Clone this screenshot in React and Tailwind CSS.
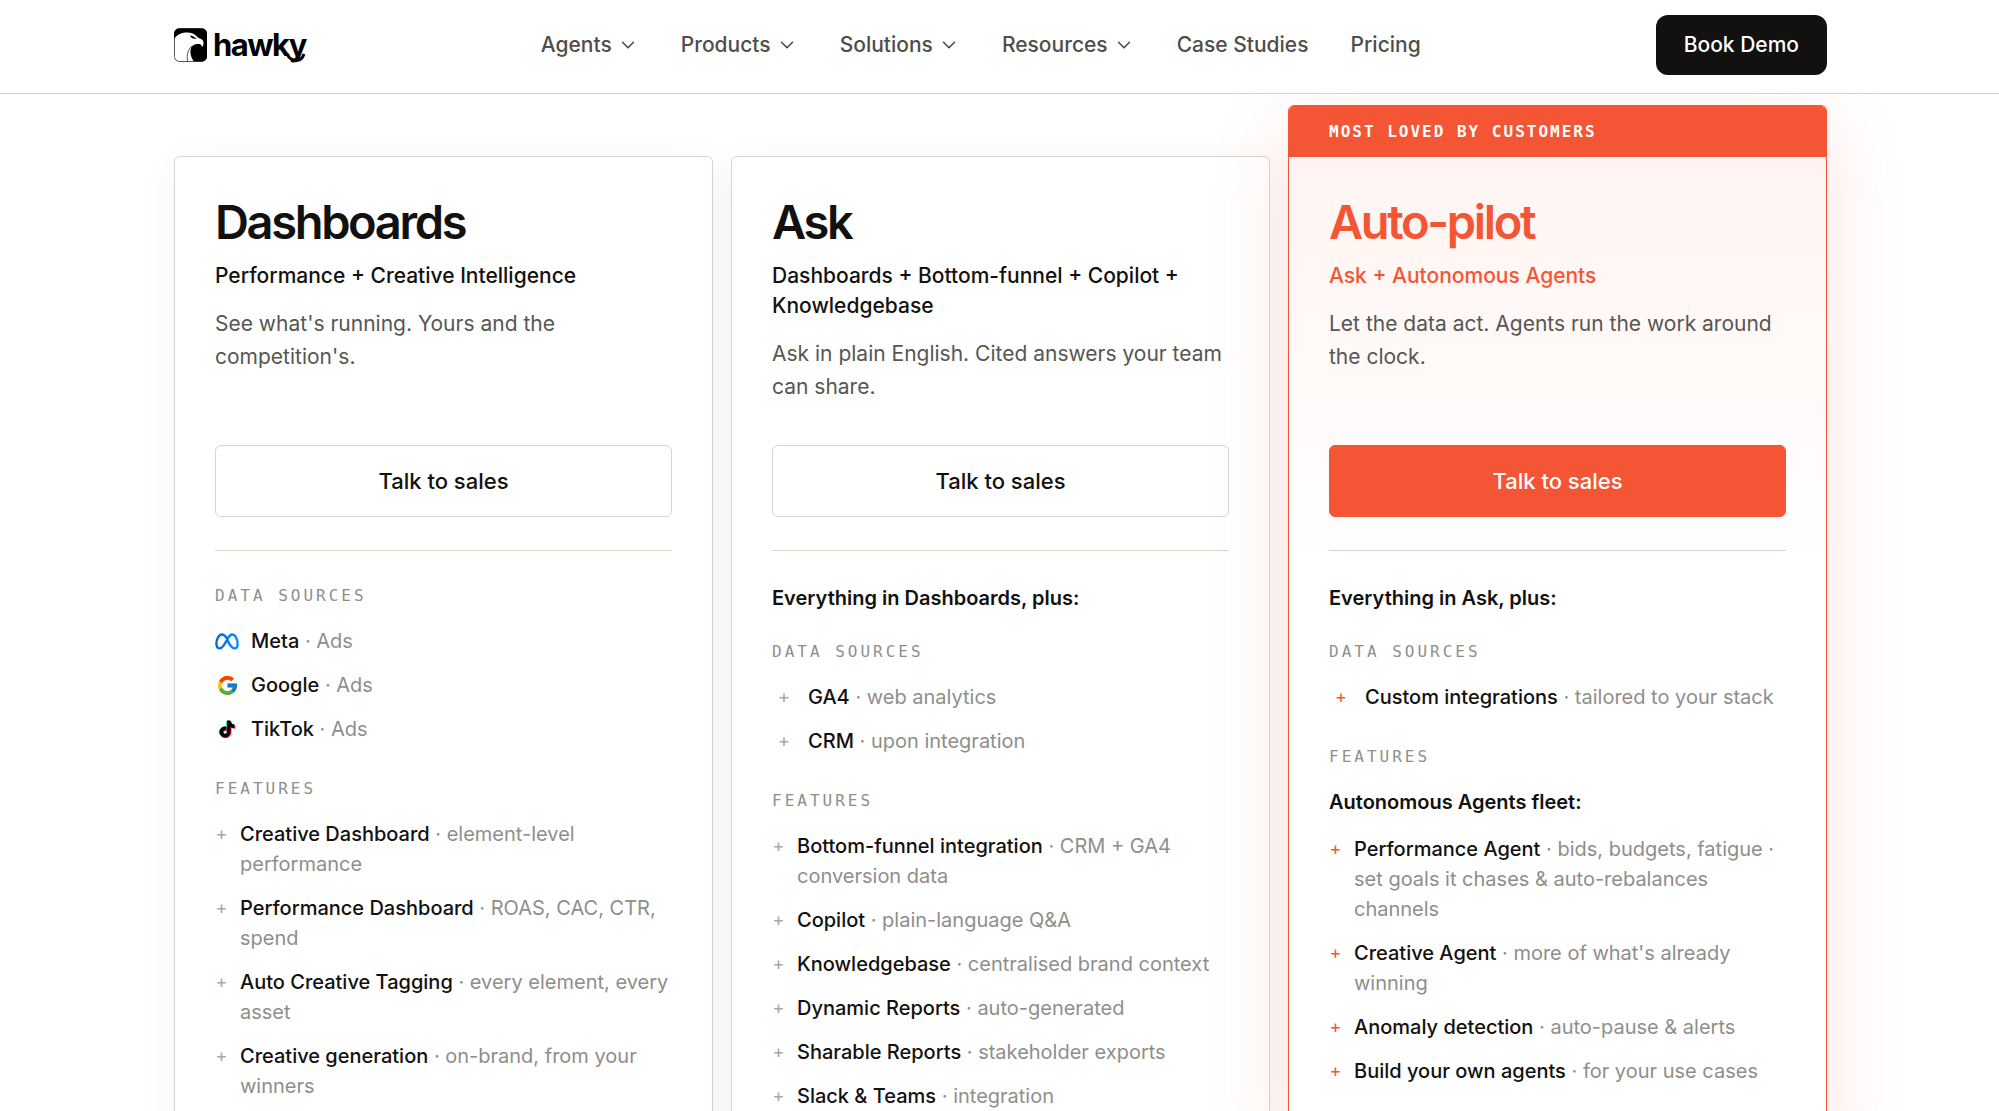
import { ChevronDown } from "lucide-react";

const navItems = [
  { label: "Agents", menu: true },
  { label: "Products", menu: true },
  { label: "Solutions", menu: true },
  { label: "Resources", menu: true },
  { label: "Case Studies", menu: false },
  { label: "Pricing", menu: false },
];

function MetaIcon() {
  return (
    <svg viewBox="0 0 24 17" className="w-6 h-[17px]" fill="none" aria-hidden="true">
      <defs>
        <linearGradient id="meta-blue" x1="0" y1="0" x2="1" y2="0">
          <stop offset="0" stopColor="#0668e1" />
          <stop offset="1" stopColor="#0a8bfa" />
        </linearGradient>
      </defs>
      <path
        d="M12 5.5C10.3 2.9 8.9 1.5 7 1.5C3.9 1.5 1.4 6 1.4 10.8C1.4 13.7 2.6 15.4 4.7 15.4C6.8 15.4 8.2 13.6 10.3 9.9L12 6.8C13.5 3.9 15 1.5 17.2 1.5C20.2 1.5 22.6 6 22.6 10.9C22.6 13.7 21.4 15.4 19.4 15.4C17.3 15.4 16 13.7 13.7 9.9Z"
        stroke="url(#meta-blue)"
        strokeWidth="2.4"
        strokeLinejoin="round"
      />
    </svg>
  );
}

function GoogleIcon() {
  return (
    <svg viewBox="4 4 40 40" className="size-[19px]" aria-hidden="true">
      <path fill="#FFC107" d="M43.6 20H42v0H24v8h11.3c-1.6 4.7-6.1 8-11.3 8-6.6 0-12-5.4-12-12s5.4-12 12-12c3.1 0 5.8 1.2 8 3l5.7-5.7C34 6.1 29.3 4 24 4 13 4 4 13 4 24s9 20 20 20 20-9 20-20c0-1.3-.1-2.7-.4-4z" />
      <path fill="#FF3D00" d="M6.3 14.7l6.6 4.8C14.7 15.1 19 12 24 12c3.1 0 5.8 1.2 8 3l5.7-5.7C34 6.1 29.3 4 24 4 16.3 4 9.7 8.3 6.3 14.7z" />
      <path fill="#4CAF50" d="M24 44c5.2 0 9.9-2 13.4-5.2l-6.2-5.2C29.2 35.1 26.7 36 24 36c-5.2 0-9.6-3.3-11.3-7.9l-6.5 5C9.5 39.6 16.2 44 24 44z" />
      <path fill="#1976D2" d="M43.6 20H24v8h11.3c-.8 2.2-2.2 4.2-4.1 5.6l6.2 5.2C37 39.2 44 34 44 24c0-1.3-.1-2.7-.4-4z" />
    </svg>
  );
}

const tiktokNote =
  "M16.6 5.8A4.3 4.3 0 0 1 15.5 3h-3.1v12.4a2.6 2.6 0 1 1-2.6-2.7c.3 0 .5 0 .8.1V9.6a5.7 5.7 0 0 0-.8 0 5.7 5.7 0 1 0 5.7 5.7V9a7.3 7.3 0 0 0 4.3 1.4V7.3a4.3 4.3 0 0 1-3.2-1.5z";

function TikTokIcon() {
  return (
    <svg viewBox="2 1 20 22" className="h-5 w-[18px]" aria-hidden="true">
      <path d={tiktokNote} fill="#25f4ee" stroke="#25f4ee" strokeWidth="1" transform="translate(-1 .3)" />
      <path d={tiktokNote} fill="#fe2c55" stroke="#fe2c55" strokeWidth="1" transform="translate(1 .8)" />
      <path d={tiktokNote} fill="#000" stroke="#000" strokeWidth="1" />
    </svg>
  );
}

const plans = [
  {
    name: "Dashboards",
    tagline: "Performance + Creative Intelligence",
    description: "See what's running. Yours and the competition's.",
    sources: [
      { icon: <MetaIcon />, name: "Meta", note: "Ads" },
      { icon: <GoogleIcon />, name: "Google", note: "Ads" },
      { icon: <TikTokIcon />, name: "TikTok", note: "Ads" },
    ],
    features: [
      { name: "Creative Dashboard", note: "element-level performance" },
      { name: "Performance Dashboard", note: "ROAS, CAC, CTR, spend" },
      { name: "Auto Creative Tagging", note: "every element, every asset" },
      { name: "Creative generation", note: "on-brand, from your winners" },
    ],
  },
  {
    name: "Ask",
    tagline: "Dashboards + Bottom-funnel + Copilot + Knowledgebase",
    description: "Ask in plain English. Cited answers your team can share.",
    includes: "Everything in Dashboards, plus:",
    sources: [
      { name: "GA4", note: "web analytics" },
      { name: "CRM", note: "upon integration" },
    ],
    features: [
      { name: "Bottom-funnel integration", note: "CRM + GA4 conversion data" },
      { name: "Copilot", note: "plain-language Q&A" },
      { name: "Knowledgebase", note: "centralised brand context" },
      { name: "Dynamic Reports", note: "auto-generated" },
      { name: "Sharable Reports", note: "stakeholder exports" },
      { name: "Slack & Teams", note: "integration" },
    ],
  },
  {
    name: "Auto-pilot",
    tagline: "Ask + Autonomous Agents",
    description: "Let the data act. Agents run the work around the clock.",
    includes: "Everything in Ask, plus:",
    badge: "Most loved by customers",
    sources: [{ name: "Custom integrations", note: "tailored to your stack" }],
    fleet: "Autonomous Agents fleet:",
    features: [
      {
        name: "Performance Agent",
        note: "bids, budgets, fatigue · set goals it chases & auto-rebalances channels",
      },
      { name: "Creative Agent", note: "more of what's already winning" },
      { name: "Anomaly detection", note: "auto-pause & alerts" },
      { name: "Build your own agents", note: "for your use cases" },
    ],
  },
];

function Logo() {
  return (
    <a href="#home" aria-label="hawky home" className="flex items-center gap-1.5 text-black">
      <svg viewBox="0 0 33 34" className="w-[33px] h-[34px]" aria-hidden="true">
        <rect x=".5" y=".5" width="32" height="33" rx="5" fill="#fff" stroke="#555" />
        {/* dark corner, beak and body */}
        <path d="M0 11V5.5A5 5 0 0 1 5 .5H28A5 5 0 0 1 33 5.5V28.5A5 5 0 0 1 28 33.5H20C16.5 29 15.5 23 17.5 19C19 16.3 22 15.6 25 16C27 16.3 27.7 17.3 28 19C30 17 30 13 28 11.5C26.5 10.5 25 10.5 24 9.5C21.5 6 16.5 4 11.5 4.5C6 5 2 8 0 11Z" />
        {/* eye */}
        <path d="M16 7.5C18.5 7.5 20 9.5 23 10.3C21 11.3 17 11 16 7.5Z" />
        <path d="M13.5 33C12.5 27 14 21 18 18" fill="none" stroke="#555" />
      </svg>
      <span className="relative text-[31px] leading-[40px] font-bold tracking-tighter">
        hawky
        <svg viewBox="0 0 20 10" className="absolute right-0 bottom-0.5 w-5 h-2.5" fill="none" aria-hidden="true">
          <path d="M1 1C5 9.5 15 10 18 1" stroke="#000" strokeWidth="3" />
        </svg>
      </span>
    </a>
  );
}

function Header() {
  return (
    <header className="relative z-10 bg-white border-b border-[#d6d3ca] pl-[174px] pr-[172px]">
      <div className="h-[93px] pb-1 flex items-center justify-between">
        <Logo />
        <nav aria-label="Main" className="flex items-center gap-[42px] text-[21px] font-medium text-[#4f4e4b]">
          {navItems.map((item) =>
            item.menu ? (
              <button key={item.label} className="flex items-center gap-[5px]">
                {item.label}
                <ChevronDown size={22} strokeWidth={1.75} />
              </button>
            ) : (
              <a key={item.label} href="#page">
                {item.label}
              </a>
            )
          )}
        </nav>
        <button className="h-[60px] px-7 rounded-xl bg-[#12110f] text-white text-[21px] font-medium">
          Book Demo
        </button>
      </div>
    </header>
  );
}

function SectionLabel({ children }) {
  return (
    <h3 className="font-['DejaVu_Sans_Mono',monospace] text-base leading-[26px] tracking-[3px] uppercase text-[#8f8e8b]">
      {children}
    </h3>
  );
}

function ItemText({ item }) {
  return (
    <span className="text-[#8f8e8b]">
      <strong className="font-medium text-[#12110f]">{item.name}</strong> · {item.note}
    </span>
  );
}

function PlanCard({ plan }) {
  const featured = Boolean(plan.badge);
  const plus = featured ? "text-[#f35535]" : "text-[#a9a7a2]";

  return (
    <article
      className={
        featured
          ? "-mt-[51px] flex flex-col rounded-md border border-[#f35535] bg-white shadow-[0_20px_80px_rgba(243,85,53,0.16)]"
          : "flex flex-col rounded-md border border-[#d9d5cc] bg-white shadow-[0_8px_40px_rgba(0,0,0,0.05)]"
      }
    >
      {featured && (
        <p className="h-[51px] px-10 flex items-center rounded-t-[5px] bg-[#f35535] text-white font-['DejaVu_Sans_Mono',monospace] font-bold text-base tracking-[2px] uppercase">
          {plan.badge}
        </p>
      )}
      <div
        className={`px-10 pt-[38px] pb-10 ${
          featured ? "bg-linear-to-b from-[#fff4f1] to-white to-[420px]" : ""
        }`}
      >
        <div className="h-[250px]">
          <h2
            className={`text-[47px] leading-[53px] font-semibold tracking-tighter ${
              featured ? "text-[#f35535]" : "text-[#12110f]"
            }`}
          >
            {plan.name}
          </h2>
          <p
            className={`mt-[13px] text-[21px] leading-[30px] font-medium ${
              featured ? "text-[#f35535]" : "text-[#12110f]"
            }`}
          >
            {plan.tagline}
          </p>
          <p className="mt-4 text-[21px] leading-[33px] text-[#575653]">{plan.description}</p>
        </div>

        <button
          className={`w-full h-[72px] rounded-md border text-[22px] font-medium ${
            featured
              ? "border-[#f35535] bg-[#f35535] text-white"
              : "border-[#d9d5cc] bg-white text-[#12110f]"
          }`}
        >
          Talk to sales
        </button>

        <hr className="mt-[33px] mb-8 border-[#d9d5cc]" />

        {plan.includes && (
          <p className="mb-[26px] text-xl leading-[30px] font-semibold text-[#12110f]">{plan.includes}</p>
        )}

        <SectionLabel>Data sources</SectionLabel>
        <ul className="mt-[17px] mb-8 flex flex-col gap-3.5 text-xl leading-[30px]">
          {plan.sources.map((source) => (
            <li key={source.name} className="flex items-center gap-3">
              <span className={`w-6 shrink-0 flex justify-center text-lg leading-[30px] ${plus}`}>
                {source.icon || "+"}
              </span>
              <ItemText item={source} />
            </li>
          ))}
        </ul>

        <SectionLabel>Features</SectionLabel>
        {plan.fleet && (
          <p className="mt-[17px] text-xl leading-[30px] font-semibold text-[#12110f]">{plan.fleet}</p>
        )}
        <ul className="mt-[17px] flex flex-col gap-3.5 text-xl leading-[30px]">
          {plan.features.map((feature) => (
            <li key={feature.name} className="flex gap-3">
              <span className={`w-[13px] shrink-0 text-center text-lg leading-[30px] ${plus}`}>+</span>
              <ItemText item={feature} />
            </li>
          ))}
        </ul>
      </div>
    </article>
  );
}

function App() {
  return (
    <div className="h-screen overflow-hidden bg-white font-[Inter,sans-serif]">
      <Header />
      <main className="pt-[62px] pl-[174px] pr-[172px] grid grid-cols-3 gap-[18px]">
        {plans.map((plan) => (
          <PlanCard key={plan.name} plan={plan} />
        ))}
      </main>
    </div>
  );
}

export default App;
